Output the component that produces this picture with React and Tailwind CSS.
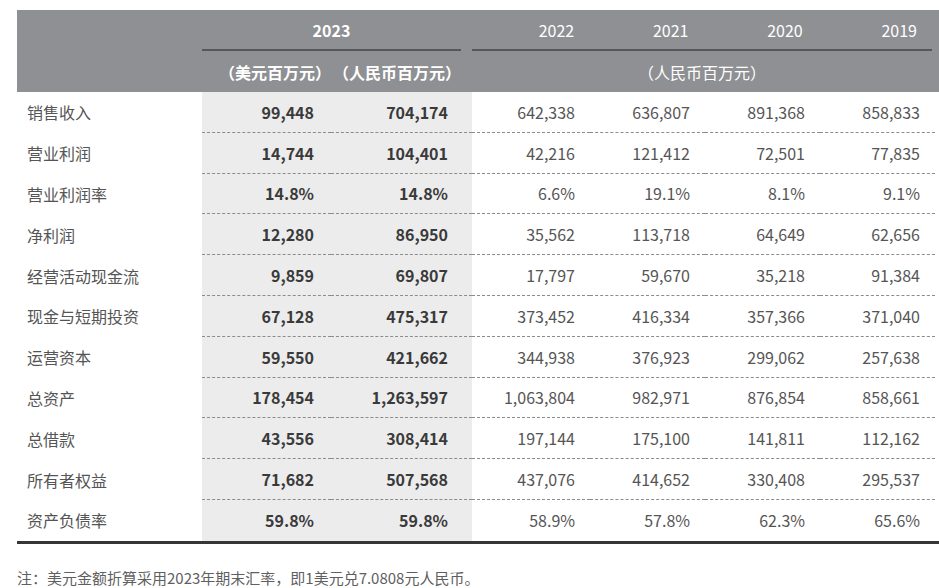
import React from "react";

const rows = [
  ["销售收入", "99,448", "704,174", "642,338", "636,807", "891,368", "858,833"],
  ["营业利润", "14,744", "104,401", "42,216", "121,412", "72,501", "77,835"],
  ["营业利润率", "14.8%", "14.8%", "6.6%", "19.1%", "8.1%", "9.1%"],
  ["净利润", "12,280", "86,950", "35,562", "113,718", "64,649", "62,656"],
  ["经营活动现金流", "9,859", "69,807", "17,797", "59,670", "35,218", "91,384"],
  ["现金与短期投资", "67,128", "475,317", "373,452", "416,334", "357,366", "371,040"],
  ["运营资本", "59,550", "421,662", "344,938", "376,923", "299,062", "257,638"],
  ["总资产", "178,454", "1,263,597", "1,063,804", "982,971", "876,854", "858,661"],
  ["总借款", "43,556", "308,414", "197,144", "175,100", "141,811", "112,162"],
  ["所有者权益", "71,682", "507,568", "437,076", "414,652", "330,408", "295,537"],
  ["资产负债率", "59.8%", "59.8%", "58.9%", "57.8%", "62.3%", "65.6%"],
];

const font = { fontFamily: '"Noto Sans CJK SC", "Noto Sans", sans-serif' };

export default function App() {
  return (
    <div className="w-[939px] h-[588px] bg-white overflow-hidden [text-spacing-trim:space-all]" style={font}>
      <div className="pt-[10px]">
        {/* header band */}
        <div className="ml-[17px] w-[922px] bg-[#8e9093] text-white text-[16px]">
          <div className="flex h-[41px]">
            <div className="w-[185px]" />
            <div className="w-[259px] flex items-center justify-center font-bold border-b-2 border-[#55575a]">
              2023
            </div>
            <div className="w-[11px]" />
            <div className="w-[460px] flex border-b-2 border-[#55575a]">
              {["2022", "2021", "2020", "2019"].map((y, i) => (
                <div
                  key={y}
                  className={`${i === 0 ? "w-[118px]" : "w-[115px]"} flex items-center justify-end pr-[15px]`}
                >
                  {y}
                </div>
              ))}
            </div>
          </div>
          <div className="flex h-[41px]">
            <div className="w-[185px]" />
            <div className="w-[129px] flex items-center justify-end font-bold whitespace-nowrap">（美元百万元）</div>
            <div className="w-[130px] flex items-center justify-end font-bold whitespace-nowrap">（人民币百万元）</div>
            <div className="w-[11px]" />
            <div className="w-[460px] flex items-center justify-center">（人民币百万元）</div>
          </div>
        </div>

        {/* body */}
        <div className="ml-[17px] w-[922px] border-b-[3px] border-[#363636]">
          {rows.map((r, idx) => {
            const last = idx === rows.length - 1;
            const dash = last ? "" : "border-b border-dashed border-[#8c8c8c]";
            return (
              <div key={r[0]} className="flex h-[40.8px] text-[16px]">
                <div className="w-[185px] flex items-center pl-[10px] text-[#555]">{r[0]}</div>
                <div className={`w-[129px] bg-[#ececed] flex items-center justify-end pr-[17px] font-bold text-[#3a3a3a] ${dash}`}>
                  {r[1]}
                </div>
                <div className={`w-[141px] bg-[#ececed] flex items-center justify-end pr-[24px] font-bold text-[#3a3a3a] ${dash}`}>
                  {r[2]}
                </div>
                <div className={`w-[118px] flex items-center justify-end pr-[15px] text-[#555] ${dash}`}>{r[3]}</div>
                <div className={`w-[115px] flex items-center justify-end pr-[15px] text-[#555] ${dash}`}>{r[4]}</div>
                <div className={`w-[115px] flex items-center justify-end pr-[15px] text-[#555] ${dash}`}>{r[5]}</div>
                <div className={`w-[115px] flex items-center justify-end pr-[15px] text-[#555] ${dash}`}>{r[6]}</div>
              </div>
            );
          })}
        </div>

        <p className="ml-[17px] mt-[26px] text-[15px] text-[#5f5f5f] leading-[16px] whitespace-nowrap">
          注：美元金额折算采用2023年期末汇率，即1美元兑7.0808元人民币。
        </p>
      </div>
    </div>
  );
}
